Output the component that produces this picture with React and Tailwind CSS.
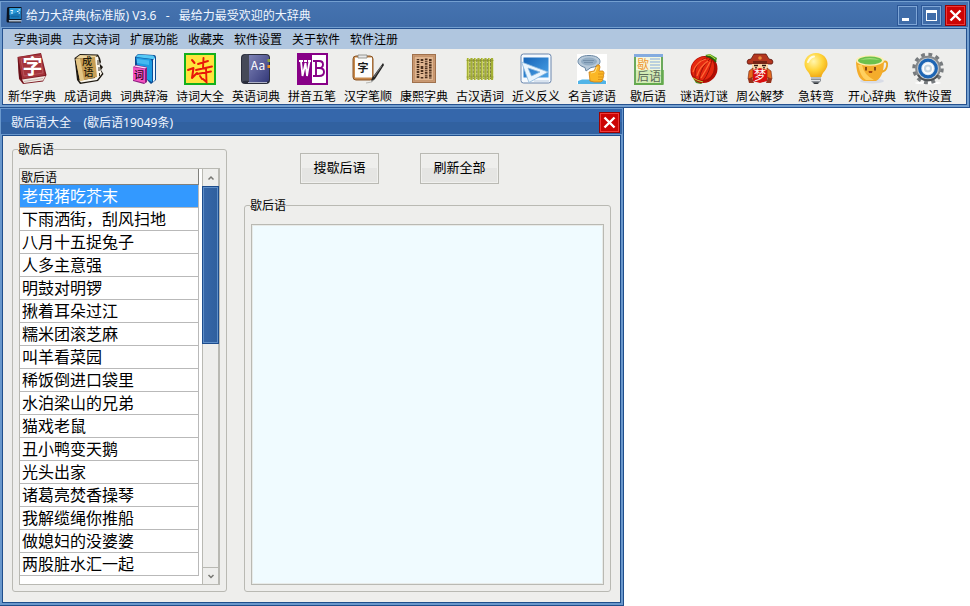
import React from "react";

const MENUS = ["字典词典", "古文诗词", "扩展功能", "收藏夹", "软件设置", "关于软件", "软件注册"];

const RIDDLES = [
  "老母猪吃芥末",
  "下雨洒街，刮风扫地",
  "八月十五捉兔子",
  "人多主意强",
  "明鼓对明锣",
  "揪着耳朵过江",
  "糯米团滚芝麻",
  "叫羊看菜园",
  "稀饭倒进口袋里",
  "水泊梁山的兄弟",
  "猫戏老鼠",
  "丑小鸭变天鹅",
  "光头出家",
  "诸葛亮焚香操琴",
  "我解缆绳你推船",
  "做媳妇的没婆婆",
  "两股脏水汇一起",
];

function Icon({ children }) {
  return (
    <svg viewBox="0 0 32 32" className="size-8 shrink-0 overflow-visible" aria-hidden="true">
      {children}
    </svg>
  );
}

function AppLogo() {
  return (
    <svg viewBox="0 0 16 16" className="size-4 shrink-0" aria-hidden="true">
      <path d="M1 1.500Q1 0 2.500 0H15.500V13H3.500Q2.500 13 2.500 14H15V15.500H2Q.5 15.500 .5 14Z" fill="#0b1220" />
      <path d="M3 13.200H15.500V14.500H3Z" fill="#c9d3dd" />
      <path d="M3.500 1H15V12H3.500Z" fill="#1878b8" />
      <path d="M3.500 1H15V4L3.500 8Z" fill="#2d9bd8" />
      <path d="M4.500 3.500H6M6.500 3V4.500M5 6H7M12.500 3H14M11 4.500H12.500M12.500 6H14" stroke="#e9f8ff" strokeWidth="1.200" />
      <path d="M5 9.500H13" stroke="#1467a3" strokeWidth="1.500" />
    </svg>
  );
}

function XinhuaIcon() {
  return (
    <Icon>
      <path d="M1.500 4 25 0 30.500 22 27 28.500 7 31 3 26Z" fill="#7d1a22" />
      <path d="M2 4 25 1 29 22 6 26Z" fill="#a5343c" />
      <path d="M2 4 6 26 7 30 3 24Z" fill="#661019" />
      <path d="M6 26.500 29.500 23 27 27.500 8 30Z" fill="#f2eae4" />
      <path d="M8 28.500 27 25.500" stroke="#b9a29b" strokeWidth=".7" />
      <path d="M5 6 24 3.500 27 20 8 23Z" fill="none" stroke="#c0636a" strokeWidth=".7" />
      <text x="16.500" y="20.500" textAnchor="middle" fontSize="20" fontWeight="700" fill="#fff">字</text>
    </Icon>
  );
}

function IdiomIcon() {
  return (
    <Icon>
      <path d="M2.500 5 8 1 26 1.500 28 5 29 9 28 11 31 14 29 17 31.500 21 26 28 8 31 5 27Z" fill="#1c1710" />
      <path d="M23 4 26 3.500 27.500 10 28.500 17 30 20.500 25 27 9 29.500 7 27.500 23 25Z" fill="#faf6ec" />
      <path d="M26 7V12M27 14V18M27.500 20V23" stroke="#3a3020" />
      <path d="M3.500 5.500 8 2 25 2.500 22 6Z" fill="#ecd49d" />
      <path d="M3.500 6 23 4 25 24 8 28Z" fill="#c79e55" />
      <path d="M3.500 6 8 5.500 12 27 8 28Z" fill="#e3c586" />
      <text fontSize="10" fontWeight="500" fill="#241a08" textAnchor="middle">
        <tspan x="15" y="12">成</tspan>
        <tspan x="16.500" y="23">语</tspan>
      </text>
    </Icon>
  );
}

function CihaiIcon() {
  return (
    <Icon>
      <path d="M7 4 10 1 26 2Q28 2 28 5V27L23 31 20 28 7 12Z" fill="#0c4b93" />
      <path d="M8 4 10 1.500 25 2.500Q27 3 27 6L24 6Z" fill="#54c8f5" />
      <path d="M8 4.500 21 6Q24 6 24 9V29L11 22Z" fill="#1e9be2" />
      <path d="M25 7 27 5V27L25 29Z" fill="#eaf6ff" />
      <path d="M9 6 21 7.500V12L9 10Z" fill="#46b9f0" />
      <path d="M5 14 8 12 19 14V29L16 31 5 28Z" fill="#8d1b81" />
      <path d="M5 14 17 16V30L5 27Z" fill="#f253c1" />
      <path d="M6 13.500 8 12.500 19 14.500 17 15.500Z" fill="#ffd7f4" />
      <text x="11" y="26" textAnchor="middle" fontSize="10" fontWeight="500" fill="#1a0618">词</text>
    </Icon>
  );
}

function PoetryIcon() {
  return (
    <Icon>
      <rect x="1" y="1" width="30" height="30" fill="#ffe43c" stroke="#13b01c" strokeWidth="2" />
      <path d="M8 7 10.500 10M4 17 9.500 15 8 25 13 20" fill="none" stroke="#e8170a" strokeWidth="2" strokeLinecap="round" strokeLinejoin="round" />
      <path d="M14 11 24 8M19.500 5 19 15M12 17 28 13.500M13 21 27 18.500M22 15 22.500 29 19 26M16 23 18 26" fill="none" stroke="#e8170a" strokeWidth="1.900" strokeLinecap="round" />
    </Icon>
  );
}

function EnglishIcon() {
  return (
    <Icon>
      <defs>
        <linearGradient id="english-cover" x1="0" y1="0" x2="1" y2="1">
          <stop offset="0" stopColor="#7d82b5" />
          <stop offset="1" stopColor="#34397a" />
        </linearGradient>
      </defs>
      <rect x="1" y="1" width="29" height="30" rx="4" fill="#2b2e3c" />
      <path d="M2 4Q5 0 9 2V28Q4 27 2 29Z" fill="#454958" />
      <path d="M9 2H26Q29 2 29 5V26Q29 29 26 29H9Z" fill="url(#english-cover)" />
      <path d="M8 29.500H27" stroke="#aeb1c6" />
      <path d="M27.500 6H30V9H27.500Z" fill="#8da33a" />
      <path d="M27.500 12H30V15H27.500Z" fill="#f0941d" />
      <text x="18" y="17" textAnchor="middle" fontSize="12" fill="#fff">Aa</text>
    </Icon>
  );
}

function WubiIcon() {
  return (
    <Icon>
      <rect x="1" width="31" height="32" fill="#870087" />
      <rect x="16" y="2" width="14" height="28" fill="#fff" />
      <path d="M3 8H7M8 8H11M12 8H15M5 8 6.500 23 9.500 10 11 23 13.500 8" fill="none" stroke="#fff" strokeWidth="1.800" />
      <path d="M17 8H23Q27 8 27 11.500 27 15 23 15H20M23 15Q28 15 28 19 28 23 23 23H17M20 8V23" fill="none" stroke="#870087" strokeWidth="1.900" />
    </Icon>
  );
}

function StrokeIcon() {
  return (
    <Icon>
      <rect x="1" y="3" width="20" height="24" rx="3" fill="#c98a4b" stroke="#8a5526" />
      <rect x="3" y="4.500" width="17" height="20" fill="#fdfdfb" />
      <path d="M6 2H15V5H6Z" fill="#e8e8e8" stroke="#80807c" strokeWidth=".8" />
      <text x="11" y="18.500" textAnchor="middle" fontSize="11" fontWeight="700" fill="#191919">字</text>
      <path d="M31 10 32 12 23 26 19 29.500 20 25Z" fill="#252525" />
      <path d="M29.500 13 22 24" stroke="#8c8c8c" strokeWidth=".8" />
      <path d="M14 30Q19 30 22 27" fill="none" stroke="#b7b7b3" />
    </Icon>
  );
}

function KangxiIcon() {
  return (
    <Icon>
      <rect x="4.500" y="1.500" width="23" height="28" fill="#c99872" stroke="#a0714c" />
      <rect x="6.500" y="3.500" width="19" height="24" fill="#dfb590" stroke="#bd8b63" strokeWidth=".6" />
      <g stroke="#4a2f1c" strokeWidth="2.600">
        <path d="M10 6V25.500" strokeDasharray="1.200 .8 2 1" />
        <path d="M14 6V25.500" strokeDasharray="2 1.100 1 3 3 .8" />
        <path d="M18.200 5.500V25.500" strokeDasharray="1.800 .9 1.100 .7" />
        <path d="M22.300 6V25.500" strokeDasharray="2.200 .7 1.300 1" />
      </g>
    </Icon>
  );
}

function BambooIcon() {
  return (
    <Icon>
      <path d="M2.500 6H29.500V26H2.500Z" fill="#e3e3a8" />
      <path d="M4 5V27M7.500 5V27M11 5V27M14.500 5V27M18 5V27M21.500 5V27M25 5V27M28 5V27" stroke="#a3b035" strokeWidth="2.200" />
      <path d="M4.500 5V27M11.500 5V27M18.500 5V27M25.500 5V27" stroke="#ccd45c" />
      <path d="M5.800 6V26M9.300 6V26M12.800 6V26M16.300 6V26M19.800 6V26M23.300 6V26M26.500 6V26" stroke="#66682a" strokeWidth=".8" strokeDasharray="3 .8" />
      <path d="M2.500 7.500H29.500M2.500 24H29.500" stroke="#8a9128" strokeWidth=".6" />
    </Icon>
  );
}

function SynonymIcon() {
  return (
    <Icon>
      <defs>
        <linearGradient id="synonym-board" x1="0" y1="0" x2="1" y2="1">
          <stop offset="0" stopColor="#1764b7" />
          <stop offset="1" stopColor="#4aa3e8" />
        </linearGradient>
      </defs>
      <rect x="1" y="1" width="30" height="29" rx="2.500" fill="#f6fafe" stroke="#6a86ad" />
      <rect x="3.500" y="4.500" width="25" height="20" fill="url(#synonym-board)" />
      <path d="M1.500 9 28 19 9 29.500Z M8 15 11.500 23 20 19Z" fillRule="evenodd" fill="#eaf5fd" stroke="#8db8dc" strokeWidth=".8" />
      <path d="M14 28H29" stroke="#b9cbe0" />
    </Icon>
  );
}

function QuoteIcon() {
  return (
    <Icon>
      <rect x="1" y="1" width="30" height="30" fill="#fff" />
      <path d="M2 28 6 26.500H26L30 28V31H2Z" fill="#51b4e7" />
      <path d="M13 2.500C6 2.500 2 5 2 8.500S7 14 9 14.500L10 18 15 14.500C20 14 24 12 24 8.500S20 2.500 13 2.500Z" fill="#b7c9d9" stroke="#6886a2" />
      <ellipse cx="13" cy="8.500" rx="8" ry="4" fill="#93adc4" />
      <path d="M7 7.500H18M8 9.500H17" stroke="#7590aa" />
      <path d="M13 19 18 18 21 12Q24 11 24 14L23 18H27Q29 20 27.500 22 28 24 27 25 27 28 25 29H18L14 28Z" fill="#fbb726" stroke="#cf7f12" strokeWidth=".8" />
      <path d="M22 21H27M22 24H27M22 26.500H26" stroke="#d4840f" strokeWidth=".7" />
      <path d="M15 20 19 19 21 14" fill="none" stroke="#ffe28a" />
    </Icon>
  );
}

function XiehouyuIcon() {
  return (
    <Icon>
      <rect x="2" y="1" width="29" height="31" fill="#6aa95b" />
      <path d="M2 1H31V4H2Z" fill="#83abe0" />
      <path d="M4 4H29V30H4Z" fill="#f3f7df" />
      <path d="M4 17H29V30H4Z" fill="#d3ecb5" />
      <path d="M18 6H28M18 9H28M18 12H28M18 15H28" stroke="#83aadd" strokeWidth="1.100" />
      <text fontSize="12">
        <tspan x="5" y="15.500" fill="#f0972f">歇</tspan>
        <tspan x="5" y="28" fill="#5a6957">后语</tspan>
      </text>
      <path d="M2 31H31V17" fill="none" stroke="#63aa4a" strokeWidth="1.500" />
    </Icon>
  );
}

function LanternIcon() {
  return (
    <Icon>
      <path d="M5 25 9 24 16 29 13 31 8 30Z" fill="#4c8d21" />
      <path d="M17 2 22 1 29 5 28 9Z" fill="#4f9d22" />
      <path d="M18 3 22 2 27 6" fill="none" stroke="#c7e34d" />
      <ellipse cx="16" cy="16.500" rx="14" ry="13" transform="rotate(-45 16 16.500)" fill="#b40d04" />
      <ellipse cx="15" cy="15.500" rx="12" ry="11" transform="rotate(-45 15 15.500)" fill="#e52810" />
      <path d="M22 4Q5 7 7 25M23 5Q13 13 11 27M24 6Q22 19 15 28M26 8Q29 21 19 28" fill="none" stroke="#9d1206" />
      <path d="M18 6Q8 9 5 19M20 8Q12 13 9 23M22 9Q18 17 13 25" fill="none" stroke="#ff6a35" strokeWidth="1.300" />
      <path d="M18 3Q24 4 28 9" fill="none" stroke="#26600d" strokeWidth="1.500" />
      <path d="M5 25Q10 28 15 29" fill="none" stroke="#b8d93d" />
    </Icon>
  );
}

function DreamIcon() {
  return (
    <Icon>
      <path d="M10 1H22L25 6Q29 6 29 9 29 12 25 11H7Q3 12 3 9 3 6 7 6Z" fill="#b3361f" stroke="#52120c" strokeWidth=".7" />
      <path d="M9 8H23V12H9Z" fill="#772416" />
      <circle cx="16" cy="5" r="1.800" fill="#e98a3a" />
      <path d="M8 11H24V16L20 19H12L8 16Z" fill="#fbd5a7" />
      <path d="M10 12.500H14M18 12.500H22" stroke="#2a1510" strokeWidth="1.300" />
      <path d="M12 14V15.500M20 14V15.500" stroke="#2a1510" strokeWidth="1.500" />
      <path d="M5 18 9 15V25L4 26ZM27 18 23 15V25L28 26Z" fill="#e5681c" stroke="#6d2410" strokeWidth=".6" />
      <path d="M4 26 8 24 10 30H5ZM28 26 24 24 22 30H27Z" fill="#96321b" />
      <path d="M9 17 16 15 23 17V28L16 30 9 28Z" fill="#d90f0f" />
      <text x="16" y="27" textAnchor="middle" fontSize="12" fill="#fff">梦</text>
    </Icon>
  );
}

function BulbIcon() {
  return (
    <Icon>
      <defs>
        <radialGradient id="bulb-glass" cx=".4" cy=".35" r=".65">
          <stop offset="0" stopColor="#fff6ae" />
          <stop offset=".6" stopColor="#ffd438" />
          <stop offset="1" stopColor="#f2ad18" />
        </radialGradient>
      </defs>
      <path d="M16 0C9 0 4.500 5 4.500 11 4.500 17 10 19 10.500 24H21.500C22 19 27.500 17 27.500 11 27.500 5 23 0 16 0Z" fill="url(#bulb-glass)" />
      <path d="M8 9Q10 4 14 3.500" fill="none" stroke="#fffbe0" strokeWidth="2" strokeLinecap="round" />
      <path d="M11 24H21V28L18 31H14L11 28Z" fill="#8d9298" />
      <path d="M11 25H21M11 27.500H20" stroke="#e3e6e8" />
      <path d="M13 29.500H19L17.500 31H14.500Z" fill="#34383c" />
    </Icon>
  );
}

function CupIcon() {
  return (
    <Icon>
      <ellipse cx="16" cy="28" rx="12" ry="2.500" fill="#d8dce6" />
      <path d="M27 9Q32 7 31 13 30 19 24 19" fill="none" stroke="#eaa622" strokeWidth="1.800" />
      <path d="M0 7Q0 25 8 28H20Q28 24 28 7Z" fill="#f4ac2b" />
      <path d="M2 12Q5 25 10 27H18Q8 22 6 12Z" fill="#ffd05f" />
      <ellipse cx="14" cy="7.500" rx="14" ry="5.200" fill="#fff0b0" />
      <ellipse cx="14" cy="7.500" rx="12" ry="4" fill="#6cc04c" />
      <path d="M4 7Q14 3 24 7 14 5.500 4 7Z" fill="#a4df7c" />
      <path d="M10 14V17.500M19 14V17.500" stroke="#6b3410" strokeWidth="1.600" />
      <path d="M12.500 18H16.500L16 20H13Z" fill="#a8480f" />
    </Icon>
  );
}

function GearIcon() {
  return (
    <Icon>
      <ellipse cx="16" cy="30" rx="13" ry="1.500" fill="#fff" />
      <circle cx="16" cy="15.500" r="14" fill="none" stroke="#777b7e" strokeWidth="3.500" strokeDasharray="3.800 3.530" />
      <circle cx="16" cy="15.500" r="11.800" fill="#c5c8ca" stroke="#85898c" strokeWidth="2" />
      <path d="M6 22A12 12 0 0 0 26 22" fill="none" stroke="#4e5255" strokeWidth="2" />
      <circle cx="16" cy="15.500" r="8.300" fill="#dfeaf4" stroke="#1d65b4" strokeWidth="3.200" />
      <circle cx="16" cy="15.500" r="4.800" fill="#c5d4df" stroke="#fff" strokeWidth="1.500" />
      <circle cx="16" cy="15.500" r="2" fill="#f7f9fa" />
    </Icon>
  );
}

const TOOLS = [
  ["新华字典", XinhuaIcon],
  ["成语词典", IdiomIcon],
  ["词典辞海", CihaiIcon],
  ["诗词大全", PoetryIcon],
  ["英语词典", EnglishIcon],
  ["拼音五笔", WubiIcon],
  ["汉字笔顺", StrokeIcon],
  ["康熙字典", KangxiIcon],
  ["古汉语词", BambooIcon],
  ["近义反义", SynonymIcon],
  ["名言谚语", QuoteIcon],
  ["歇后语", XiehouyuIcon],
  ["谜语灯谜", LanternIcon],
  ["周公解梦", DreamIcon],
  ["急转弯", BulbIcon],
  ["开心辞典", CupIcon],
  ["软件设置", GearIcon],
];

function CloseButton({ label }) {
  return (
    <button
      type="button"
      aria-label={label}
      className="flex size-[21px] items-center justify-center border border-[#9c0000] bg-[#cc0404] shadow-[inset_0_0_0_1px_#ee3a3a]"
    >
      <svg viewBox="0 0 13 13" className="size-[13px]" aria-hidden="true">
        <path d="M1.500 1.500 11.500 11.500M11.500 1.500 1.500 11.500" stroke="#fff" strokeWidth="2.400" />
      </svg>
    </button>
  );
}

function CaptionButton({ label, children }) {
  return (
    <button
      type="button"
      aria-label={label}
      className="flex size-[21px] items-center justify-center border border-[#2b5797] bg-[#3f6ca8] shadow-[inset_0_0_0_1px_#7fa6d6]"
    >
      <svg viewBox="0 0 13 13" className="size-[13px]" aria-hidden="true">
        {children}
      </svg>
    </button>
  );
}

function MainWindow() {
  return (
    <header className="border-y border-r border-[#24518f] bg-[#739fd0]">
      <div className="m-px flex h-[25px] items-center bg-linear-to-b from-[#4573b0] to-[#3f6ca8] pt-px pr-[2px] pl-[5px]">
        <AppLogo />
        <h1 className="ml-1 flex-1 truncate pt-px font-['Noto_Sans','Noto_Sans_CJK_SC',sans-serif] text-xs whitespace-pre text-[#f0f6ff]">
          {"给力大辞典(标准版) V3.6  "}
          <span className="mx-[3px]">-</span>
          {"  最给力最受欢迎的大辞典"}
        </h1>
        <div className="flex gap-[3px]">
          <CaptionButton label="最小化">
            <path d="M1 9H8V12H1Z" fill="#fff" />
          </CaptionButton>
          <CaptionButton label="最大化">
            <path d="M1 1H12V12H1Z M2 4V11H11V4Z" fillRule="evenodd" fill="#fff" />
          </CaptionButton>
          <CloseButton label="关闭" />
        </div>
      </div>
      <div className="mx-[2px] mb-[2px] border border-[#24518f] bg-[#eeeeec]">
        <nav aria-label="主菜单" className="flex h-5 items-center gap-2.5 bg-[#b0c6df] pl-[11px]">
          {MENUS.map((menu) => (
            <button key={menu} type="button" className="shrink-0 text-xs">
              {menu}
            </button>
          ))}
        </nav>
        <div role="toolbar" aria-label="词典" className="flex h-[55px] overflow-hidden pl-px">
          {TOOLS.map(([label, Glyph]) => (
            <button key={label} type="button" className="flex w-14 shrink-0 flex-col items-center gap-[3px] pt-1 text-xs">
              <Glyph />
              <span>{label}</span>
            </button>
          ))}
        </div>
      </div>
    </header>
  );
}

function Chevron({ d }) {
  return (
    <svg viewBox="0 0 8 8" className="size-2" aria-hidden="true">
      <path d={d} fill="none" stroke="#777773" strokeWidth="1.500" />
    </svg>
  );
}

function ScrollBar() {
  return (
    <div className="flex w-[17px] flex-col border-x border-[#b9b9b3] bg-[#eeeeec]">
      <button type="button" aria-label="向上滚动" className="flex h-[17px] items-center justify-center">
        <Chevron d="M1.500 5.500 4 3 6.500 5.500" />
      </button>
      <div className="flex-1">
        <div className="-mx-px h-[158px] border border-[#1d4c8c] bg-linear-to-r from-[#3767a9] to-[#2f5f9d] shadow-[inset_0_0_0_1px_#5f8fc8]" />
      </div>
      <button type="button" aria-label="向下滚动" className="flex h-[17px] items-center justify-center border-t border-[#b9b9b3]">
        <Chevron d="M1.500 3 4 5.500 6.500 3" />
      </button>
    </div>
  );
}

function RiddleList() {
  return (
    <fieldset className="w-[215px] shrink-0 rounded-[3px] border border-[#b9b9b3] px-1.5 pt-3 pb-1.5">
      <legend className="-ml-px text-xs leading-[14px]">歇后语</legend>
      <div className="flex justify-between border border-[#b9b9b3] bg-white">
        <div className="mb-2 w-[179px]">
          <table className="w-full border-separate border-spacing-0 text-left">
            <thead>
              <tr>
                <th className="border-r border-b border-[#80807c] bg-[#eeeeec] p-0 pl-px text-xs leading-[15px] font-normal">歇后语</th>
              </tr>
            </thead>
            <tbody>
              {RIDDLES.map((riddle, index) => (
                <tr key={riddle} className={index === 0 ? "bg-[#3399ff] text-white" : ""}>
                  <td className="border-r border-b border-[#b9b9b9] p-0 pb-0.5 pl-0.5 text-base leading-5 whitespace-nowrap">{riddle}</td>
                </tr>
              ))}
            </tbody>
          </table>
        </div>
        <ScrollBar />
      </div>
    </fieldset>
  );
}

function ActionButton({ children }) {
  return (
    <button
      type="button"
      className="h-[31px] w-[79px] border border-[#b9b9b3] bg-linear-to-b from-[#eeeeec] from-50% to-[#e5e5e3] to-50% pb-1 text-[13px] shadow-[inset_0_0_0_1px_#f0f0ee]"
    >
      {children}
    </button>
  );
}

function RiddleWindow() {
  return (
    <main className="w-156 max-w-full border-r border-b border-[#1f4e8c] bg-[#6a98cc] pt-px pb-[2px]">
      <div className="mx-px flex h-[25px] items-center justify-between bg-linear-to-b from-[#3567ab] from-50% to-[#3161a0] to-50% pt-px pr-[2px] pl-2.5">
        <h2 className="pt-px font-['Noto_Sans','Noto_Sans_CJK_SC',sans-serif] text-xs whitespace-pre text-[#f0f6ff]">{"歇后语大全    (歇后语19049条)"}</h2>
        <CloseButton label="关闭歇后语大全" />
      </div>
      <div className="mx-[2px] mt-px flex gap-[17px] border border-[#1f4e8c] bg-[#eeeeec] px-[9px] pt-1.5 pb-2.5">
        <RiddleList />
        <section className="flex min-w-0 flex-1 flex-col gap-3.5">
          <div className="flex gap-[41px] pt-[11px] pl-14">
            <ActionButton>搜歇后语</ActionButton>
            <ActionButton>刷新全部</ActionButton>
          </div>
          <fieldset className="min-h-0 flex-1 rounded-[3px] border border-[#b9b9b3] px-1.5 pt-3 pb-1.5">
            <legend className="-ml-px text-xs leading-[14px]">
              <label htmlFor="riddle-text">歇后语</label>
            </legend>
            <textarea
              id="riddle-text"
              className="block h-full w-full resize-none border border-[#b9b9b3] bg-[#f0fbff] p-1 text-base shadow-[inset_0_0_0_1px_#e8ebe9] outline-none"
            />
          </fieldset>
        </section>
      </div>
    </main>
  );
}

export default function App() {
  return (
    <div className="min-h-screen bg-white font-['Noto_Sans_CJK_SC',sans-serif] text-black">
      <MainWindow />
      <RiddleWindow />
    </div>
  );
}
